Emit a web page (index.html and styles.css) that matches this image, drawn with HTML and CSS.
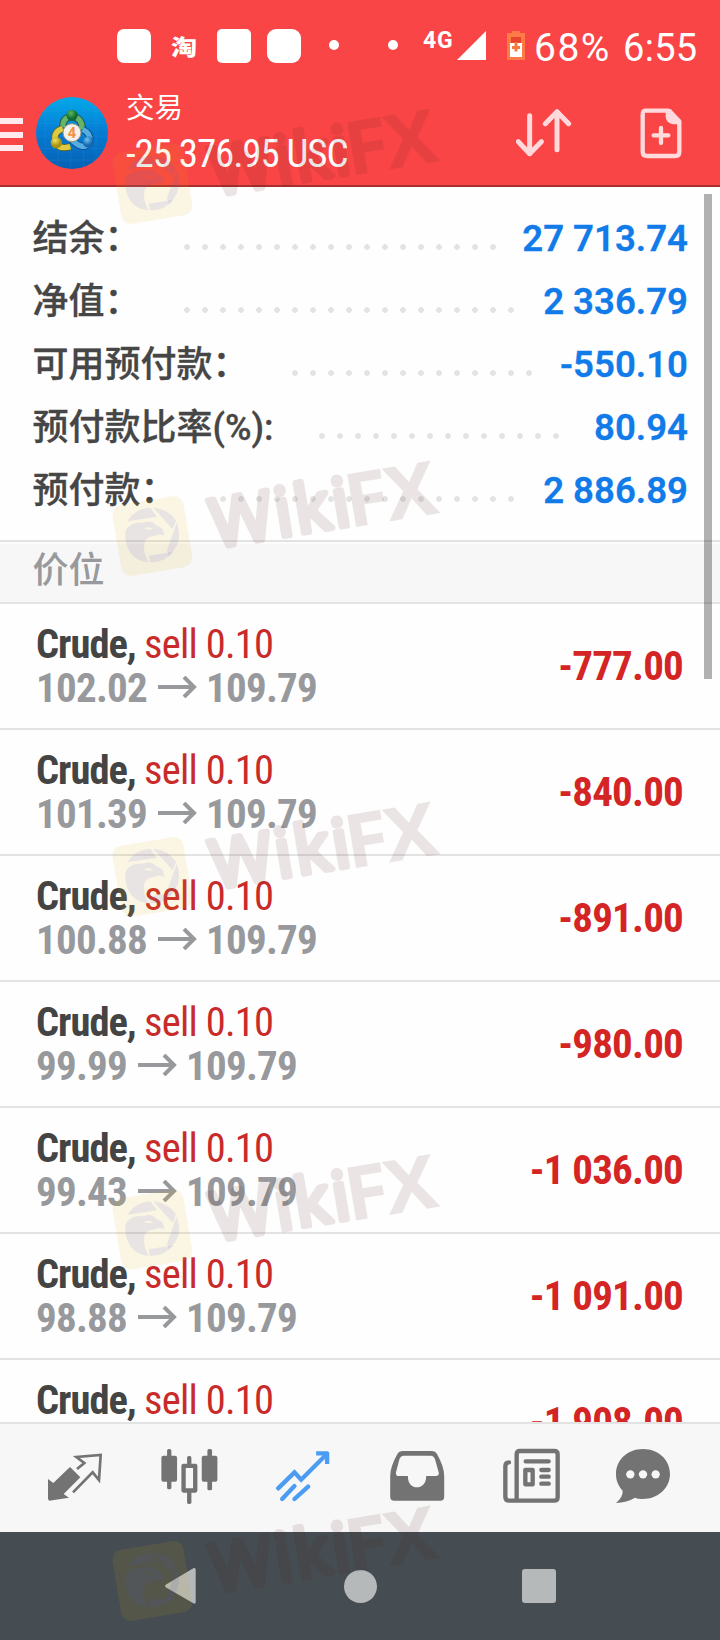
FILE: index.html
```
<!DOCTYPE html>
<html lang="zh-CN">
<head>
<meta charset="utf-8">
<title>交易</title>
<link rel="stylesheet" href="styles.css">
</head>
<body>
<div class="screen">
  <header class="top">
    <div class="status">
      <i class="app-icon"></i>
      <span class="tao">淘</span>
      <i class="app-icon app-icon--b"></i>
      <i class="app-icon app-icon--c"></i>
      <i class="dot"></i>
      <i class="dot dot--b"></i>
      <span class="net">4G</span>
      <svg class="signal" viewBox="0 0 29 29"><path d="M29 0V29H0Z"/></svg>
      <svg class="battery" viewBox="0 0 18 29"><path d="M5 0h8v2h5v27H0V2h5z" fill="#ff7a45"/><path d="M4 6h10v6H4z" fill="#e8452f"/><path d="M3 12h12v14H3z" fill="#fff"/><path d="M7.500 11h3v4H13v3h-2.500v2.500h-3V18H5v-3h2.500z" fill="#f47b3c"/></svg>
      <span class="pct">68%</span>
      <span class="time">6:55</span>
    </div>
    <div class="bar">
      <div class="burger"><i></i><i></i><i></i></div>
      <svg class="avatar" viewBox="18 21 216 216">
        <defs>
          <linearGradient id="sky" x1="0" y1="0" x2="0" y2="1"><stop offset="0" stop-color="#04a9e9"/><stop offset=".5" stop-color="#057bd3"/><stop offset="1" stop-color="#0560b4"/></linearGradient>
          <radialGradient id="gr" cx=".4" cy=".3"><stop offset="0" stop-color="#5cbb59"/><stop offset="1" stop-color="#116a35"/></radialGradient>
          <radialGradient id="ye" cx=".4" cy=".3"><stop offset="0" stop-color="#f3e35a"/><stop offset="1" stop-color="#a89112"/></radialGradient>
          <radialGradient id="bl" cx=".4" cy=".3"><stop offset="0" stop-color="#6cc5f2"/><stop offset="1" stop-color="#1566ad"/></radialGradient>
        </defs>
        <circle cx="126" cy="129" r="108" fill="url(#sky)"/>
        <path d="M46 60V198M84 30V228M122 22V236M160 28V232M198 52V206M42 62H210M24 100H228M20 138H232M26 176H226M56 210H196" stroke="#3cb6ee" stroke-opacity=".28" stroke-width="1.500" fill="none"/>
        <path d="M99 112Q96 82 126 80Q156 82 157 118" fill="none" stroke="#20503c" stroke-width="21"/>
        <path d="M99 112Q96 82 126 80Q156 82 157 118" fill="none" stroke="#64b567" stroke-width="16"/>
        <path d="M98 116Q70 124 75 155Q88 180 121 170" fill="none" stroke="#5f6420" stroke-width="21"/>
        <path d="M98 116Q70 124 75 155Q88 180 121 170" fill="none" stroke="#dccb42" stroke-width="16"/>
        <path d="M158 118Q184 130 180 158Q160 184 124 149" fill="none" stroke="#0e4d88" stroke-width="21"/>
        <path d="M158 118Q184 130 180 158Q160 184 124 149" fill="none" stroke="#55aee2" stroke-width="16"/>
        <circle cx="126" cy="76" r="17" fill="url(#gr)"/><circle cx="79" cy="158" r="17" fill="url(#ye)"/><circle cx="175" cy="156" r="17" fill="url(#bl)"/>
        <circle cx="126" cy="128" r="27" fill="#f4f1ea" stroke="#96997e" stroke-width="3"/>
        <text x="126" y="143" text-anchor="middle" class="four">4</text>
      </svg>
      <div class="titles"><div class="title">交易</div><div class="total">-25 376.95 USC</div></div>
      <svg class="sort" viewBox="470 320 168 156"><path d="M511 346V460M477 424L511 460L546 424M593 448V334M558 370L593 334L628 370"/></svg>
      <svg class="add" viewBox="840 320 126 156"><path d="M855 331H924L958 364V454Q958 467 945 467H862Q848 467 848 454V344Q848 331 855 331Z" fill="none" stroke="#ffd9db" stroke-width="13"/><path d="M917 328V350Q920 370 940 372H962V358L932 326Z" fill="#ffd9db"/><path d="M881 405H925M903 383V428" stroke="#ffd9db" stroke-width="13" stroke-linecap="round"/></svg>
    </div>
  </header>

  <main class="content">
    <section class="summary">
      <div class="line"><span class="label">结余：</span><i class="dots" style="width:324px"></i><b class="value">27 713.74</b></div>
      <div class="line"><span class="label">净值：</span><i class="dots" style="width:342px"></i><b class="value">2 336.79</b></div>
      <div class="line"><span class="label">可用预付款：</span><i class="dots" style="width:252px"></i><b class="value">-550.10</b></div>
      <div class="line"><span class="label">预付款比率(%):</span><i class="dots dots--wide" style="width:252px"></i><b class="value">80.94</b></div>
      <div class="line"><span class="label">预付款：</span><i class="dots" style="width:306px"></i><b class="value">2 886.89</b></div>
    </section>
    <h2 class="section">价位</h2>
    <section class="positions">
      <article class="pos"><div><div class="sym">Crude, <span>sell 0.10</span></div><div class="price">102.02<svg class="arrow" viewBox="0 0 39 22"><path d="M0 11H37M26 1L36 11L26 21"/></svg>109.79</div></div><b class="profit">-777.00</b></article>
      <article class="pos"><div><div class="sym">Crude, <span>sell 0.10</span></div><div class="price">101.39<svg class="arrow" viewBox="0 0 39 22"><path d="M0 11H37M26 1L36 11L26 21"/></svg>109.79</div></div><b class="profit">-840.00</b></article>
      <article class="pos"><div><div class="sym">Crude, <span>sell 0.10</span></div><div class="price">100.88<svg class="arrow" viewBox="0 0 39 22"><path d="M0 11H37M26 1L36 11L26 21"/></svg>109.79</div></div><b class="profit">-891.00</b></article>
      <article class="pos"><div><div class="sym">Crude, <span>sell 0.10</span></div><div class="price">99.99<svg class="arrow" viewBox="0 0 39 22"><path d="M0 11H37M26 1L36 11L26 21"/></svg>109.79</div></div><b class="profit">-980.00</b></article>
      <article class="pos"><div><div class="sym">Crude, <span>sell 0.10</span></div><div class="price">99.43<svg class="arrow" viewBox="0 0 39 22"><path d="M0 11H37M26 1L36 11L26 21"/></svg>109.79</div></div><b class="profit">-1 036.00</b></article>
      <article class="pos"><div><div class="sym">Crude, <span>sell 0.10</span></div><div class="price">98.88<svg class="arrow" viewBox="0 0 39 22"><path d="M0 11H37M26 1L36 11L26 21"/></svg>109.79</div></div><b class="profit">-1 091.00</b></article>
      <article class="pos"><div><div class="sym">Crude, <span>sell 0.10</span></div></div><b class="profit">-1 908.00</b></article>
    </section>
    <i class="scroll"></i>
  </main>

  <nav class="tabs">
    <svg viewBox="135 72 180 324"><path d="M144 237L160 249L210 201L241 232L191 282L207 293L148 302L144 298Z" fill="#737373"/><path d="M231 207L253 189L229 171L302 165L297 240L278 217L219 277" fill="none" stroke="#737373" stroke-width="8"/></svg>
    <svg viewBox="475.800 72 180 324" fill="#737373"><rect x="483" y="167" width="47" height="78" rx="6"/><rect x="500" y="147" width="13" height="121" rx="5"/><rect x="604" y="167" width="47" height="78" rx="6"/><rect x="621" y="147" width="14" height="124" rx="5"/><rect x="560" y="168" width="13" height="30" rx="5"/><rect x="560" y="270" width="13" height="42" rx="5"/><rect x="549.500" y="197.500" width="35" height="74" fill="none" stroke="#737373" stroke-width="13" stroke-linejoin="round"/></svg>
    <svg viewBox="815.600 72 180 324" fill="none" stroke="#4b9cf2" stroke-width="13"><path d="M834 265L883 217L903 239L978 164M846 297L883 258M883 297L924 260" stroke-linecap="round"/><path d="M948 160H981V192" stroke-linejoin="round"/><path d="M962 156H984V178Z" fill="#4b9cf2" stroke="none"/></svg>
    <svg viewBox="77.400 72 180 324"><path fill-rule="evenodd" d="M126 153H216Q226 153 230 161Q252 200 252 228V290Q252 302 240 302H102Q90 302 90 290V228Q90 200 112 161Q116 153 126 153ZM130 167Q122 167 118 176L107 218Q107 228 115 228H143C143 249 153 262 170 262S198 249 198 228H227Q236 228 236 219L224 176Q220 167 213 167Z" fill="#737373"/></svg>
    <svg viewBox="417 72 180 324" fill="none" stroke="#737373" stroke-width="13" stroke-linecap="round"><path d="M447 187Q436 187 436 199V290Q436 302 448 302H582Q593 302 593 292V163Q593 153 583 153H480Q470 153 470 163V296"/><path d="M497 184H566M544 210H566M544 230H566M544 251H566"/><rect x="496" y="210" width="22" height="43" stroke-linejoin="round"/></svg>
    <svg viewBox="759 72 180 324"><path d="M849 147C896 147 930 180 930 222S894 297 849 297C840 297 832 296 825 293C808 303 790 308 768 309C782 297 789 284 788 272C775 258 768 242 768 222C768 180 802 147 849 147Z" fill="#737373"/><g fill="#f7f7f7"><circle cx="811" cy="223" r="12.500"/><circle cx="849" cy="223" r="12.500"/><circle cx="887" cy="223" r="12.500"/></g></svg>
  </nav>

  <footer class="keys">
    <svg viewBox="492 500 99 120"><path d="M497 556L580 507Q587 504 587 511V608Q587 616 580 612L497 564Q493 560 497 556Z" fill="#b5b9ba"/></svg>
    <i class="home"></i>
    <i class="recent"></i>
  </footer>

  <svg class="marks" viewBox="0 0 720 1640">
    <defs>
      <g id="mark">
        <g transform="scale(.33333)">
          <rect x="-108" y="-108" width="216" height="216" rx="30" transform="translate(457 120) rotate(-9.500)" fill="#e4a400" fill-opacity=".1"/>
          <g fill="#505adc" fill-opacity=".11" transform="translate(0 -150)">
            <path d="M382 226Q404 188 450 185L471 212Z"/>
            <path d="M460 185Q506 190 528 224L518 250Z"/>
            <path d="M530 231Q552 288 507 329L501 313Z"/>
            <path d="M520 317Q493 350 450 349L446 329Z"/>
            <path d="M376 258C382 238 405 228 431 230C446 223 461 228 470 239C486 243 494 253 491 270Q478 261 463 270Q436 273 433 291C430 315 436 332 446 349C400 345 373 310 376 258ZM432 247Q446 254 459 248Q444 240 432 247Z" fill-rule="evenodd"/>
          </g>
        </g>
        <g transform="translate(213 54) rotate(-9.500)" opacity=".105" fill="#4b1e14" stroke="#4b1e14" class="brand">
          <text x="2" y="-2" textLength="140" lengthAdjust="spacing" class="brand-round" stroke-width="6" stroke-linejoin="round">Wiki</text>
          <text x="139" y="0" textLength="90" lengthAdjust="spacingAndGlyphs" stroke-width="2">FX</text>
        </g>
      </g>
    </defs>
    <use href="#mark" y="144"/><use href="#mark" y="496"/><use href="#mark" y="837"/><use href="#mark" y="1189.500"/><use href="#mark" y="1541"/>
  </svg>
</div>
</body>
</html>
```
FILE: styles.css
```
* { box-sizing: border-box; }
body { margin: 0; font-family: Roboto, "Noto Sans CJK SC", sans-serif; }
i { display: block; font-style: normal; }
svg { display: block; flex: none; }

.screen { position: relative; display: flex; flex-direction: column; width: 720px; height: 1640px; overflow: hidden; background: #fefefe; }
.top { height: 187px; background: #fa4546; border-bottom: 2px solid #a82f31; color: #fff; }

.status { display: flex; align-items: center; height: 91px; padding-left: 117px; white-space: nowrap; }
.app-icon { flex: none; width: 34px; height: 34px; border-radius: 7px; background: #fff; }
.app-icon--b { margin-left: 20px; border-radius: 5px; }
.app-icon--c { margin-left: 16px; border-radius: 9px; }
.tao { width: 26px; margin-left: 20px; font: 900 26px/34px "Noto Sans CJK SC", sans-serif; transform: scaleY(.85); }
.dot { flex: none; width: 10px; height: 10px; margin: -1px 0 0 28px; border-radius: 50%; background: #fff; }
.dot--b { margin-left: 49px; }
.net { width: 34px; margin: -10px 0 0 25px; font: 700 23px/24px Roboto, sans-serif; letter-spacing: .8px; }
.signal { width: 29px; height: 29px; fill: #fff; }
.battery { width: 18px; height: 29px; margin-left: 21px; }
.pct, .time { font: 400 38px/44px Roboto, sans-serif; letter-spacing: .3px; margin-top: 4px; }
.pct { width: 89px; margin-left: 9px; font-size: 39px; letter-spacing: 1.5px; }

.bar { display: flex; align-items: flex-start; height: 94px; }
.burger { display: flex; flex-direction: column; gap: 7.500px; width: 23px; margin-top: 27px; }
.burger i { height: 6px; background: #ffeaed; }
.avatar { width: 72px; height: 72px; margin: 6px 0 0 13px; }
.four { font: 700 44px Roboto, sans-serif; fill: #f3903c; }
.titles { width: 240px; margin-left: 18px; white-space: nowrap; }
.title { margin-top: -2px; font: 400 28.500px/34px "Noto Sans CJK SC", sans-serif; }
.total { margin-top: 9px; font: 400 39px/44px "Roboto Condensed", sans-serif; letter-spacing: -1.1px; }
.sort { width: 56px; height: 52px; margin: 16px 0 0 150px; fill: none; stroke: #ffd9db; stroke-width: 15; stroke-linecap: round; stroke-linejoin: round; }
.add { width: 42px; height: 52px; margin: 16px 0 0 67.500px; }

.content { position: relative; height: 1235px; overflow: hidden; }
.summary { height: 353px; padding: 20px 32px 0 32.500px; }
.line { display: flex; align-items: center; height: 63px; white-space: nowrap; }
.label { font: 500 36px/52px Roboto, "Noto Sans CJK SC", sans-serif; color: #464646; -webkit-text-stroke: .3px #464646; }
.dots { flex: none; height: 18px; margin: 16px 0 0 37.500px; background: radial-gradient(circle at 9px 9px, #e3e3e3 2.500px, transparent 3.200px) 0 0 / 18px 18px; }
.dots--wide { margin-left: 39.500px; }
.value { margin-left: auto; font: 600 36.600px/44px Roboto, sans-serif; color: #117be9; -webkit-text-stroke: .3px #117be9; }
.section { height: 64px; margin: 0; padding: 0 32.500px; border: solid #e3e3e3; border-width: 2px 0; box-shadow: inset 0 2px #fcfcfc; background: #f7f7f7; font: 500 36px/51px "Noto Sans CJK SC", sans-serif; color: #97999d; }

.pos { display: flex; justify-content: space-between; height: 126px; padding: 18px 37px 0 36px; border-bottom: 2px solid #e3e3e3; font-family: "Roboto Condensed", sans-serif; white-space: nowrap; }
.sym { font-size: 40.500px; font-weight: 700; line-height: 44px; letter-spacing: -1px; color: #444; }
.sym span { font-weight: 400; color: #c92a2a; letter-spacing: -.75px; }
.price { display: flex; align-items: center; font-size: 41px; font-weight: 700; line-height: 44px; letter-spacing: -.75px; color: #97999d; }
.arrow { width: 39px; height: 22px; margin: -3px 9.500px 0 10.500px; fill: none; stroke: #97999d; stroke-width: 4; }
.profit { margin-top: 22px; font-size: 41px; line-height: 44px; letter-spacing: -.8px; color: #d42424; }
.scroll { position: absolute; top: 7px; right: 8px; width: 8px; height: 485px; background: rgba(0, 0, 0, .3); }

.tabs { display: flex; justify-content: space-between; height: 110px; padding: 0 47px 0 45px; background: #f7f7f7; border-top: 2px solid #e3e3e3; }
.tabs svg { width: 60px; height: 108px; overflow: visible; }

.keys { display: flex; align-items: center; height: 108px; padding-left: 164px; background: #454d52; }
.keys svg { width: 33px; height: 40px; }
.home { width: 33px; height: 33px; margin-left: 146.500px; border-radius: 50%; background: #b5b9ba; }
.recent { width: 34px; height: 34px; margin-left: 145px; border-radius: 3px; background: #b5b9ba; }

.marks { position: absolute; inset: 0; width: 720px; height: 1640px; pointer-events: none; }
.brand { font: 600 72px "Noto Sans", sans-serif; }
.brand-round { font: 500 67px "Open Sans", sans-serif; }
```
